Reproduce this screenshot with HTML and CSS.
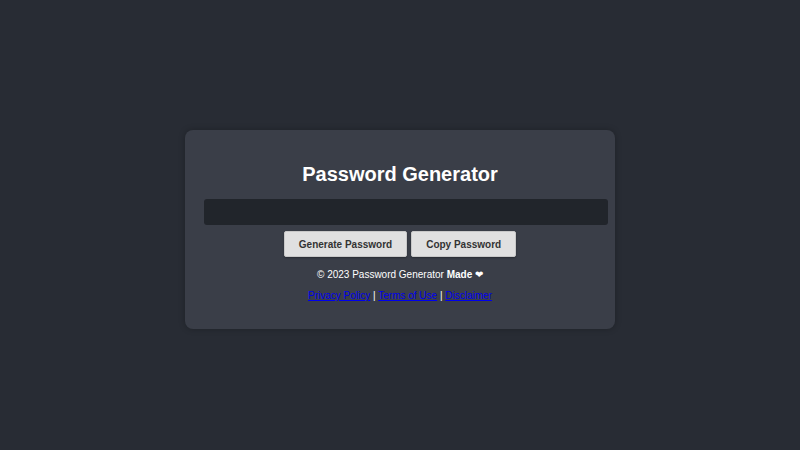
FILE: index.html
```html
<!DOCTYPE html>
<html lang="en">
<head>
<meta charset="utf-8">
<title>Password Generator</title>
<link rel="stylesheet" href="styles.css">
</head>
<body>
<main class="card">
  <h1 class="title">Password Generator</h1>
  <input class="output" type="text" readonly>
  <div class="actions">
    <button class="btn">Generate Password</button>
    <button class="btn">Copy Password</button>
  </div>
  <p class="copy">© 2023 Password Generator <strong>Made</strong> ❤</p>
  <p class="links"><a href="#">Privacy Policy</a> | <a href="#">Terms of Use</a> | <a href="#">Disclaimer</a></p>
</main>
</body>
</html>
```

FILE: styles.css
```css
html, body {
  margin: 0;
  height: 100%;
}
body {
  box-sizing: border-box;
  padding-top: 9px;
  background: #282c34;
  font-family: "Liberation Sans", Arial, sans-serif;
  color: #ffffff;
  display: flex;
  align-items: center;
  justify-content: center;
}
.card {
  box-sizing: border-box;
  width: 430px;
  height: 199px;
  padding: 20px 19px;
  background: #3a3e48;
  border-radius: 8px;
  box-shadow: 0 0 6px rgba(0, 0, 0, 0.25);
  text-align: center;
}
.title {
  margin: 9px 0 10px;
  font-size: 20px;
  font-weight: bold;
  line-height: 30px;
}
.output {
  display: block;
  box-sizing: border-box;
  width: 404px;
  height: 26px;
  margin: 0;
  border: none;
  border-radius: 3px;
  background: #21252b;
  color: #fff;
}
.actions {
  margin-top: 6px;
  display: flex;
  justify-content: center;
  gap: 4px;
}
.btn {
  height: 26px;
  padding: 0 14px;
  border: 1px solid #c8c8c8;
  border-radius: 2px;
  background: #e0e0e0;
  box-shadow: 0 1px 2px rgba(0, 0, 0, 0.3);
  color: #333;
  font-family: "Liberation Sans", Arial, sans-serif;
  font-size: 10px;
  font-weight: bold;
}
.copy {
  margin: 11px 0 0;
  font-size: 10px;
  line-height: 14px;
}
.links {
  margin: 7px 0 0;
  font-size: 10px;
  line-height: 14px;
}
.links a {
  color: #0000ee;
}
```
